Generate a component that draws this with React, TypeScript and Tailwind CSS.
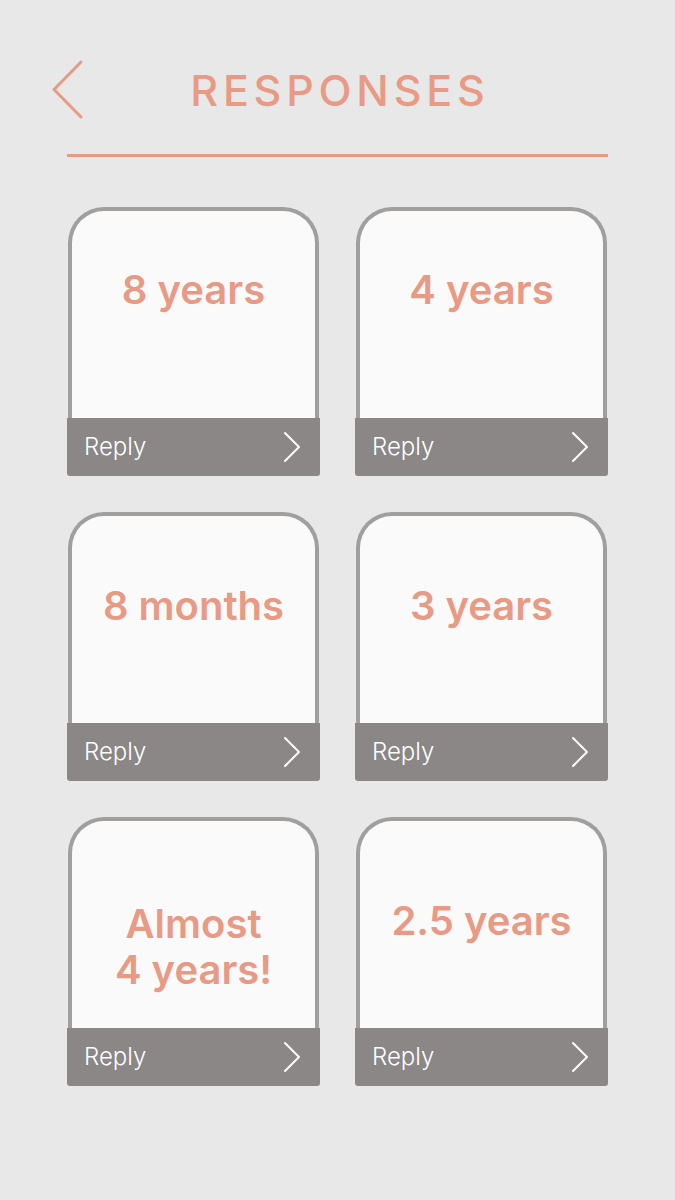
import React from "react";

const SALMON = "#e99a85";

function Chevron() {
  return (
    <svg width="18" height="32" viewBox="0 0 18 32" fill="none">
      <polyline points="2,2 16,16 2,30" stroke="#ffffff" strokeWidth="2" strokeLinecap="round" strokeLinejoin="round" />
    </svg>
  );
}

type CardProps = { lines: string[]; pt: string };

function Card({ lines, pt }: CardProps) {
  return (
    <div className="flex h-[269px] w-[253px] flex-col">
      <div
        className={`mx-px flex-1 rounded-t-[36px] border-4 border-b-0 border-[#a19e9e] bg-[#fafafa] text-center ${pt}`}
      >
        {lines.map((l) => (
          <div
            key={l}
            className="text-[40px] font-semibold leading-[46px] text-[#e99a85]"
          >
            {l}
          </div>
        ))}
      </div>
      <div className="flex h-[58px] items-center justify-between rounded-b-[3px] bg-[#8a8786] pl-[17px] pr-[19px]">
        <span className="text-[24px] font-light leading-none text-white">Reply</span>
        <Chevron />
      </div>
    </div>
  );
}

export default function App() {
  return (
    <div
      className="relative h-[1200px] w-[675px] overflow-hidden bg-[#e8e8e8]"
      style={{ fontFamily: "Inter, 'Noto Sans', sans-serif" }}
    >
      <div className="relative mt-[60px] flex h-[61px] items-center justify-center">
        <svg
          className="absolute left-[50px] top-0"
          width="34"
          height="61"
          viewBox="0 0 34 61"
          fill="none"
        >
          <polyline
            points="31,2 4,29.5 31,57"
            stroke={SALMON}
            strokeWidth="3"
            strokeLinecap="round"
            strokeLinejoin="round"
          />
        </svg>
        <h1 className="pl-[4.8px] text-[43px] font-medium leading-none tracking-[4.8px] text-[#e99a85]">
          RESPONSES
        </h1>
      </div>
      <div className="mx-[67px] mt-[33px] h-[3px] bg-[#e99a85]" />
      <div className="mt-[50px] grid grid-cols-[253px_253px] gap-x-[35px] gap-y-[36px] px-[67px]">
        <Card lines={["8 years"]} pt="pt-[56px]" />
        <Card lines={["4 years"]} pt="pt-[56px]" />
        <Card lines={["8 months"]} pt="pt-[67px]" />
        <Card lines={["3 years"]} pt="pt-[67px]" />
        <Card lines={["Almost", "4 years!"]} pt="pt-[80px]" />
        <Card lines={["2.5 years"]} pt="pt-[77px]" />
      </div>
    </div>
  );
}
